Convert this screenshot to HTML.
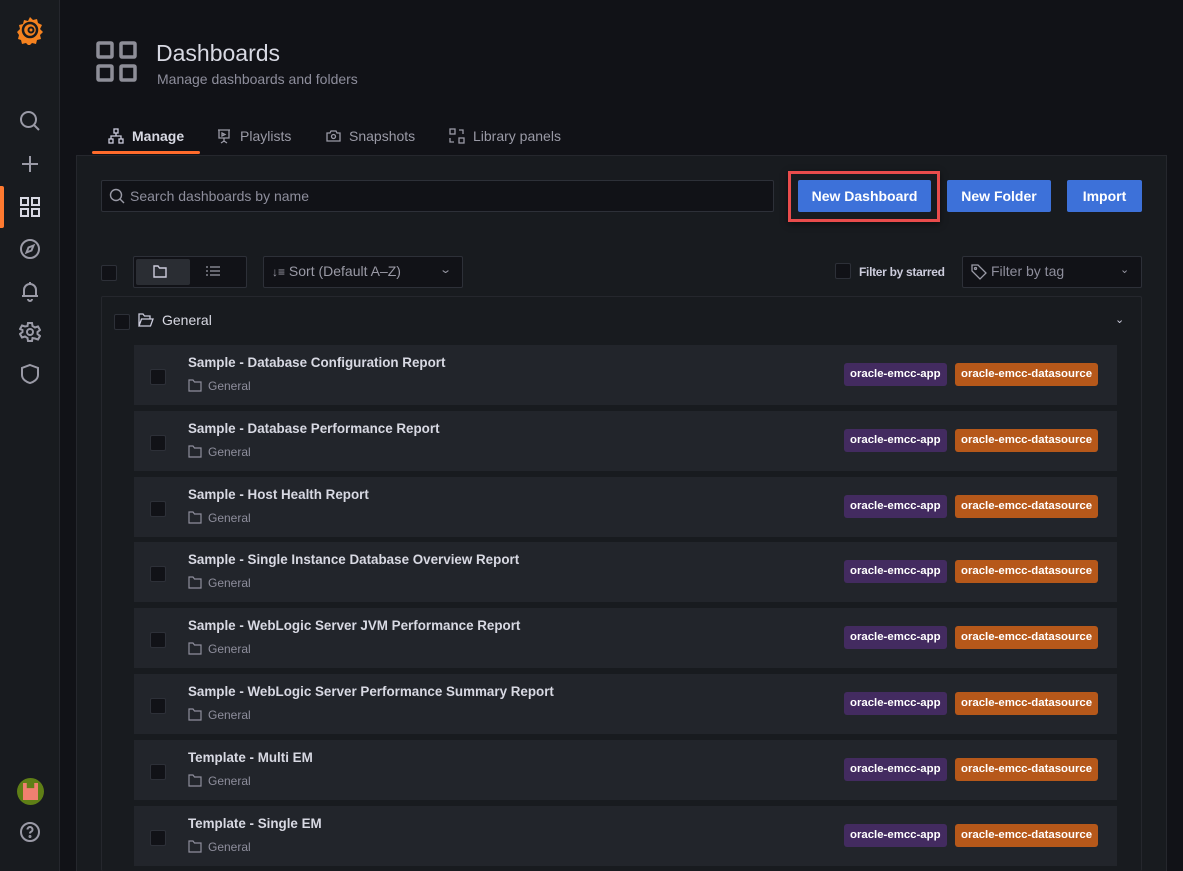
<!DOCTYPE html>
<html style="overflow:hidden;height:871px"><head><meta charset="utf-8"><style>
*{box-sizing:border-box;margin:0;padding:0}
body{width:1183px;height:871px;overflow:hidden;background:#111217;font-family:"Liberation Sans",sans-serif;color:#ccccdc;position:relative}
.side{position:absolute;left:0;top:0;width:60px;height:871px;background:#181b1f;border-right:1px solid #25272d}
.side svg{position:absolute;left:19px}
.act{position:absolute;left:0;top:186px;width:4px;height:42px;background:#ff7a30;border-radius:0 2px 2px 0}
.panel{position:absolute;left:76px;top:155px;width:1091px;height:716px;background:#181b1f;border:1px solid #25272d;border-bottom:none}
.abs{position:absolute}
.btn{position:absolute;top:180px;height:32px;background:#3d71d9;color:#fff;font-size:14px;font-weight:bold;line-height:32px;text-align:center;border-radius:2px}
.cb{position:absolute;width:16px;height:16px;background:#111217;border:1px solid #2d3038;border-radius:2px}
.row{position:absolute;left:134px;width:983px;height:60px;background:#22252b}
.row .t{position:absolute;left:54px;top:10px;font-size:13.4px;font-weight:bold;color:#d8d9e3}
.row .g{position:absolute;left:74px;top:34px;font-size:12px;color:#8e8e9c}
.row .cb{left:16px;top:24px}
.row svg{position:absolute;left:54px;top:34px}
.tag{position:absolute;top:18px;height:23px;line-height:23px;font-size:11.4px;font-weight:bold;color:#fff;padding:0 6px;border-radius:3px}
.t1{left:710px;background:#432b60}
.t2{left:821px;background:#b6581a}
</style></head><body>
<div class="side">
<svg style="left:17px;top:15px" width="27" height="30" viewBox="0 0 27 30"><path d="M13 2l3 3 4-1 1 4 4 2-2 4 3 3-3 3 1 4-4 1-1 4-4-1-3 3-3-3-4 1-1-4-3-1 1-4-2-3 3-3-1-4 4-1 1-4 4 1z" fill="#f5821f"/><circle cx="13" cy="15" r="7" fill="none" stroke="#181b1f" stroke-width="2.5"/><circle cx="14" cy="15" r="2.5" fill="none" stroke="#181b1f" stroke-width="2"/></svg>
<svg style="top:110px" width="22" height="22" viewBox="0 0 22 22" fill="none" stroke="#9a9aa6" stroke-width="2"><circle cx="9.5" cy="9.5" r="7.5"/><path d="M15 15l5 5"/></svg>
<svg style="top:153px" width="22" height="22" viewBox="0 0 22 22" stroke="#9a9aa6" stroke-width="2"><path d="M11 3v16M3 11h16"/></svg>
<div class="act"></div>
<svg style="top:196px" width="22" height="22" viewBox="0 0 22 22" fill="none" stroke="#d8d9e3" stroke-width="2"><rect x="2" y="2" width="7" height="7"/><rect x="13" y="2" width="7" height="7"/><rect x="2" y="13" width="7" height="7"/><rect x="13" y="13" width="7" height="7"/></svg>
<svg style="top:238px" width="22" height="22" viewBox="0 0 22 22" fill="none" stroke="#9a9aa6" stroke-width="2"><circle cx="11" cy="11" r="9"/><path d="M14.5 7.5l-2 5-5 2 2-5z"/></svg>
<svg style="top:280px" width="22" height="22" viewBox="0 0 22 22" fill="none" stroke="#9a9aa6" stroke-width="2"><path d="M5 16V10a6 6 0 0 1 12 0v6M3 16h16M9 19a2 2 0 0 0 4 0M11 2v2"/></svg>
<svg style="top:321px" width="22" height="22" viewBox="0 0 22 22" fill="none" stroke="#9a9aa6" stroke-width="2"><circle cx="11" cy="11" r="3"/><path d="M9 2h4l.5 3 2.5 1.5 3-1 2 3.5-2.5 2v2l2.5 2-2 3.5-3-1L13.5 17 13 20H9l-.5-3L6 15.5l-3 1-2-3.5 2.5-2v-2L1 8l2-3.5 3 1L8.5 5z"/></svg>
<svg style="top:363px" width="22" height="22" viewBox="0 0 22 22" fill="none" stroke="#9a9aa6" stroke-width="2"><path d="M11 2l8 3v7c0 4-4 7-8 8-4-1-8-4-8-8V5z"/></svg>
<div class="abs" style="left:17px;top:778px;width:27px;height:27px;border-radius:50%;background:#5f7f16;overflow:hidden"><div class="abs" style="left:6px;top:5px;width:15px;height:17px;background:#f08070;clip-path:polygon(0 0,25% 0,25% 30%,75% 30%,75% 0,100% 0,100% 100%,0 100%)"></div></div>
<svg style="top:821px" width="22" height="22" viewBox="0 0 22 22" fill="none" stroke="#9a9aa6" stroke-width="2"><circle cx="11" cy="11" r="9"/><path d="M8.5 8.5a2.5 2.5 0 1 1 3.5 2.3c-.7.4-1 .9-1 1.7"/><circle cx="11" cy="15.5" r=".5" fill="#9a9aa6"/></svg>
</div>
<svg class="abs" style="left:96px;top:41px" width="41" height="41" viewBox="0 0 41 41" fill="none" stroke="#8e8e98" stroke-width="3.5"><rect x="2" y="2" width="14" height="14" rx="1"/><rect x="25" y="2" width="14" height="14" rx="1"/><rect x="2" y="25" width="14" height="14" rx="1"/><rect x="25" y="25" width="14" height="14" rx="1"/></svg>
<div class="abs" style="left:156px;top:40px;font-size:23px;color:#d8d9e3">Dashboards</div>
<div class="abs" style="left:157px;top:71px;font-size:14px;color:#8e8e9c">Manage dashboards and folders</div>
<svg class="abs" style="left:108px;top:128px" width="16" height="16" viewBox="0 0 16 16" fill="none" stroke="#ccccdc" stroke-width="1.3"><rect x="6" y="1" width="4" height="4"/><rect x="1" y="11" width="4" height="4"/><rect x="11" y="11" width="4" height="4"/><path d="M8 5v3M3 11V8h10v3"/></svg>
<div class="abs" style="left:132px;top:128px;font-size:14px;font-weight:bold;color:#d8d9e3">Manage</div>
<div class="abs" style="left:92px;top:151px;width:108px;height:3px;background:#ff6b2b;border-radius:2px"></div>
<svg class="abs" style="left:217px;top:128px" width="14" height="16" viewBox="0 0 14 16" fill="none" stroke="#9a9aa6" stroke-width="1.3"><path d="M1 2h12M2 2v8h10V2M7 10v4M4 15l3-2 3 2M5 5l3 1.5L5 8z"/></svg>
<div class="abs" style="left:240px;top:128px;font-size:14px;color:#9a9aa6">Playlists</div>
<svg class="abs" style="left:326px;top:130px" width="15" height="12" viewBox="0 0 15 12" fill="none" stroke="#9a9aa6" stroke-width="1.3"><path d="M1 3h3l1-2h5l1 2h3v8H1z"/><circle cx="7.5" cy="6.5" r="2"/></svg>
<div class="abs" style="left:349px;top:128px;font-size:14px;color:#9a9aa6">Snapshots</div>
<svg class="abs" style="left:449px;top:128px" width="16" height="16" viewBox="0 0 16 16" fill="none" stroke="#9a9aa6" stroke-width="1.3"><rect x="1" y="1" width="5" height="5"/><rect x="10" y="10" width="5" height="5"/><path d="M10 2h4v4M1 10v4h4"/></svg>
<div class="abs" style="left:473px;top:128px;font-size:14px;color:#9a9aa6">Library panels</div>
<div class="panel"></div>
<div class="abs" style="left:101px;top:180px;width:673px;height:32px;background:#111217;border:1px solid #2d3038;border-radius:2px"></div>
<svg class="abs" style="left:109px;top:188px" width="16" height="16" viewBox="0 0 16 16" fill="none" stroke="#9a9aa6" stroke-width="1.4"><circle cx="7" cy="7" r="5.5"/><path d="M11 11l4 4"/></svg>
<div class="abs" style="left:130px;top:188px;font-size:14px;color:#8e8e9c">Search dashboards by name</div>
<div class="abs" style="left:788px;top:171px;width:152px;height:51px;border:3px solid #e94c4c;box-shadow:0 2px 6px rgba(0,0,0,.5)"></div>
<div class="btn" style="left:798px;width:133px">New Dashboard</div>
<div class="btn" style="left:947px;width:104px">New Folder</div>
<div class="btn" style="left:1067px;width:75px">Import</div>
<div class="cb" style="left:101px;top:265px"></div>
<div class="abs" style="left:133px;top:256px;width:114px;height:32px;border:1px solid #2d3038;border-radius:2px;background:#111217"></div>
<div class="abs" style="left:136px;top:259px;width:54px;height:26px;background:#2a2d33;border-radius:2px"></div>
<svg class="abs" style="left:153px;top:265px" width="14" height="13" viewBox="0 0 14 13" fill="none" stroke="#ccccdc" stroke-width="1.4"><path d="M1 1h4l1.5 2H13v9H1z"/></svg>
<svg class="abs" style="left:206px;top:266px" width="14" height="10" viewBox="0 0 14 10" stroke="#9a9aa6" stroke-width="1.2"><path d="M0 1h2M4 1h10M0 5h2M4 5h10M0 9h2M4 9h10"/></svg>
<div class="abs" style="left:263px;top:256px;width:200px;height:32px;border:1px solid #2d3038;border-radius:2px;background:#111217"></div>
<div class="abs" style="left:272px;top:263px;font-size:14px;color:#9a9aa6"><span style="font-size:12px">↓≡</span> Sort (Default A–Z)</div>
<div class="abs" style="left:441px;top:263px;font-size:11px;color:#9a9aa6;transform:scaleX(1.4)">⌄</div>
<div class="cb" style="left:835px;top:263px"></div>
<div class="abs" style="left:859px;top:265px;font-size:12px;font-weight:bold;color:#ccccdc;letter-spacing:-0.3px">Filter by starred</div>
<div class="abs" style="left:962px;top:256px;width:180px;height:32px;border:1px solid #2d3038;border-radius:2px;background:#111217"></div>
<svg class="abs" style="left:971px;top:264px" width="16" height="16" viewBox="0 0 16 16" fill="none" stroke="#9a9aa6" stroke-width="1.3"><path d="M1 1h6l8 8-6 6-8-8z"/><circle cx="4.5" cy="4.5" r="1"/></svg>
<div class="abs" style="left:991px;top:263px;font-size:14px;color:#8e8e9c">Filter by tag</div>
<div class="abs" style="left:1120px;top:263px;font-size:11px;color:#9a9aa6">⌄</div>
<div class="abs" style="left:101px;top:296px;width:1041px;height:575px;border:1px solid #25272d;border-bottom:none;border-radius:2px"></div>
<div class="cb" style="left:114px;top:314px"></div>
<svg class="abs" style="left:138px;top:313px" width="16" height="14" viewBox="0 0 16 14" fill="none" stroke="#ccccdc" stroke-width="1.3"><path d="M1 13V1h4l1.5 2H12v3M1 13l2.5-7H15l-2.5 7z"/></svg>
<div class="abs" style="left:162px;top:312px;font-size:14px;color:#d8d9e3">General</div>
<div class="abs" style="left:1115px;top:313px;font-size:11px;color:#ccccdc">⌄</div>
<div id="rows"></div>
<script>
var t=["Sample - Database Configuration Report","Sample - Database Performance Report","Sample - Host Health Report","Sample - Single Instance Database Overview Report","Sample - WebLogic Server JVM Performance Report","Sample - WebLogic Server Performance Summary Report","Template - Multi EM","Template - Single EM"];
var h="";t.forEach(function(s,i){h+='<div class="row" style="top:'+(345+i*65.8)+'px"><div class="cb"></div><div class="t">'+s+'</div><svg width="14" height="13" viewBox="0 0 14 13" fill="none" stroke="#8e8e9c" stroke-width="1.2"><path d="M1 1h4l1.5 2H13v9H1z"/></svg><div class="g">General</div><div class="tag t1">oracle-emcc-app</div><div class="tag t2">oracle-emcc-datasource</div></div>'});
document.getElementById("rows").innerHTML=h;
</script>
</body></html>
